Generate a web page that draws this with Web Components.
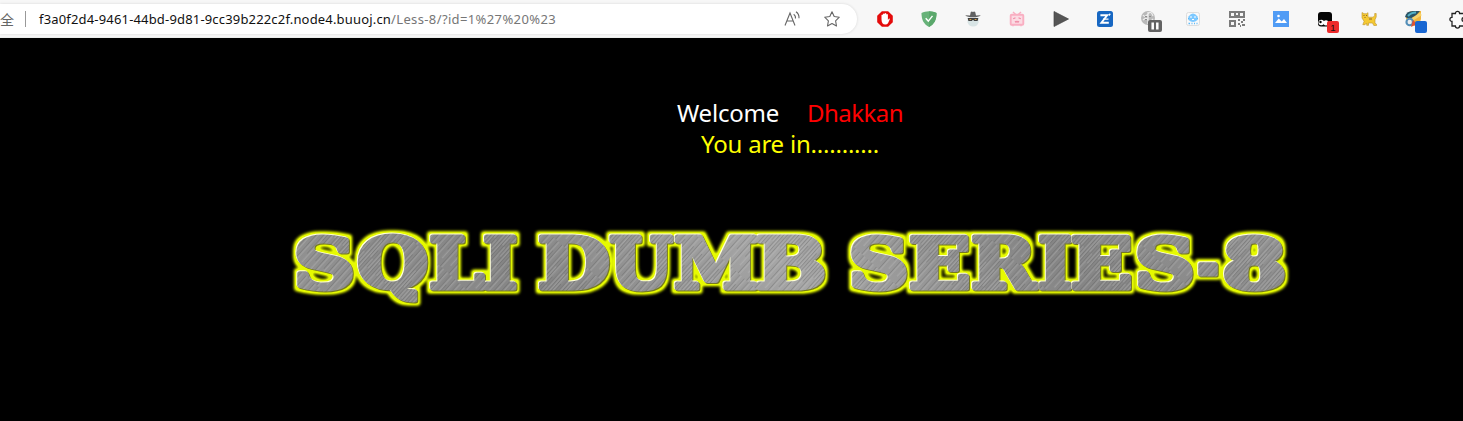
<!DOCTYPE html>
<html lang="en">
<head>
<meta charset="utf-8">
<title>Less-8</title>
<style>
html,body{margin:0;height:100%;background:#000;overflow:hidden}
</style>
</head>
<body>
<browser-window></browser-window>
<script>
const define = (name, html, init) => customElements.define(name, class extends HTMLElement {
  constructor() {
    super();
    this.attachShadow({mode: 'open'}).innerHTML = html;
  }
  connectedCallback() { if (init) init(this, this.shadowRoot); }
});
const ctx = document.createElement('canvas').getContext('2d');

/* Text spread evenly over a given width through letter spacing */
define('fit-text', `<style>:host{display:block;white-space:pre;flex:none}</style><slot></slot>`, host => {
  const width = +host.getAttribute('width'), cs = getComputedStyle(host);
  ctx.font = `${cs.fontWeight} ${cs.fontSize} ${cs.fontFamily}`;
  const text = host.textContent;
  host.style.width = width + 'px';
  host.style.letterSpacing = (width - ctx.measureText(text).width) / text.length + 'px';
});

const icons = {
  stop: `<path d="M4.9.2h6.2l4.7 4.6v6.4l-4.7 4.6H4.9L.2 11.200V4.800z" fill="#e40b0b"/><path d="M4.500 8.200V4.100q.8-1 1.500 0V7V3q.8-1 1.600 0V6.800V2.500q.9-1 1.700 0V7V3.500q.8-.9 1.600 0V9l.9-1.300q.8-.5 1.100.2L11 12.200q-1 1.400-2.600 1.400c-2.600 0-3.900-1.900-3.900-5.400z" fill="#fff"/>`,
  shield: `<path d="M8 .2C5.500.3 2.600.9.500 1.900C.4 8 2.300 12.800 8 16c5.700-3.200 7.600-8 7.500-14.100C13.400.9 10.500.3 8 .2z" fill="#67b279"/><path d="M8 .2v15.800c5.700-3.200 7.600-8 7.500-14.100C13.400.9 10.500.3 8 .2z" fill="#5ba86c"/><path d="M4.700 7.300l2.600 2.800 4.200-5.200" fill="none" stroke="#fff" stroke-width="1.400"/>`,
  spy: `<path d="M2.600 6.800h11v4.500q-1 4.200-5.500 4.200t-5.500-4.200z" fill="#d8e4e5"/><path d="M5 4.500L5.800 1q1-.9 2.200 0q1.200-.9 2.200 0L11 4.500l4.800-.3q-2.300 2-7.800 2T.2 4.200z" fill="#616161"/><path d="M2.700 7h10.600l-.7 3H9.200L8 8.700 6.800 10H3.400z" fill="#404040"/><path d="M4.500 8.500h1.800M9.700 8.500h1.800" stroke="#d79d46"/>`,
  tv: `<path d="M4 1l2.700 2.500M12 1L9.300 3.500M4 14.200v1M12 14.200v1" stroke="#f9afc2" stroke-width="1.500"/><rect x="1.700" y="3.800" width="12.600" height="10" rx="1" fill="#fbdbe3" stroke="#f9afc2" stroke-width="1.900"/><path d="M4.200 7.700l2.300-1M11.800 7.700l-2.300-1M6 10.300l1 .9 1-.9 1 .9 1-.9" fill="none" stroke="#ef8ba6" stroke-width="1.200"/>`,
  play: `<path d="M1 .5L15.500 8 1 15.500z" fill="#555" stroke="#444" stroke-width=".7"/>`,
  zed: `<rect width="16" height="16" rx="2.500" fill="#1767c2"/><path d="M3.400 4.300h6.800L4.400 11.700h7.400" fill="none" stroke="#fff" stroke-width="1.900"/><path d="M6 8.100h5.500M11.800 4.500l1.500-1.700" stroke="#fff" stroke-width="1.300"/>`,
  paused: `<circle cx="7" cy="7" r="7" fill="#b9b9b9"/><path d="M2 4q2 3 5-1t5 2M2 9q3-3 5 0t5-1M7 1v12" fill="none" stroke="#ededed" stroke-width="1.300"/><path d="M4 5.500h2M8 5.500h2M4 8.500h2" stroke="#8d8d8d"/><rect x="7" y="9" width="14" height="12" rx="2" fill="#636363"/><path d="M11.700 11.500v7M16.300 11.500v7" stroke="#fff" stroke-width="2.500"/>`,
  robot: `<rect x="1.500" y="1.500" width="13" height="13" rx="2" fill="#f9f9f9" stroke="#ddd"/><path d="M3.500 5.500q4.500-6 9 0v3.500q-4.500 4-9 0z" fill="#7cc8ff"/><path d="M5 6h2M9 6h2M7 8.500h2" stroke="#fff"/><path d="M3.500 12.500h1.500m1.500 0h1m1.500 0h1m1.500 0h1M3 7.500h1M12 7.500h1" stroke="#60baf8" stroke-width="1.500"/>`,
  qr: `<g fill="none" stroke="#7b7b7b" stroke-width="2"><path d="M1 1h5v5H1zM10 1h5v5h-5zM1 10h5v5H1z"/><path d="M8 0v2M8 4v3M9 9h2M12 11h2M9 13h2M14 9h2M13 14h3M11 15h1"/></g>`,
  image: `<rect width="16" height="16" fill="#509cf5"/><path d="M2 12l3.700-4.400 3 2.800L11 8l3 4z" fill="#fff"/><circle cx="5.500" cy="5" r="1.300" fill="#fff"/>`,
  monkey: `<rect x="1" y="1" width="14" height="14.500" rx="3" fill="#050505"/><circle cx="4.300" cy="11.500" r="2.800" fill="#fff"/><circle cx="9" cy="11.800" r="2.600" fill="#fff"/><circle cx="3.500" cy="11" r="1.200"/><rect x="10" y="10" width="12" height="12" rx="2" fill="#ed2b2b"/><text x="16" y="19.500" text-anchor="middle" font-size="9.500" fill="#111">1</text>`,
  cat: `<path d="M1 1.500l2 1.200h2.500L7 1.700v4.500h5l1.700-1.500V2.500h1.500v3.500L14 8.700v3.500l1.500 1v1.300h-2.700l-1.300-2.500H7.500v2.300H5.700V12L4 13.700H1.800l1.300-3.400L1 7z" fill="#f5c932" stroke="#bd942c" stroke-width=".6"/><path d="M2.500 4.500h1M5 4.500h1M8 8h3M3.500 6.500h1" stroke="#8b672d"/>`,
  paint: `<path d="M1 8Q1 0 9 0h7v8q-1 6-7 7z" fill="#f1b63c"/><path d="M0 6Q1 0 8 0h7L7 9z" fill="#2b5365"/><path d="M3 5q3-3.500 8-3.500" stroke="#51b1c5" stroke-width="2" fill="none"/><path d="M6 9l10-6" stroke="#f7d36b" stroke-width="3"/><circle cx="4.700" cy="11" r="4.300" fill="#548fb8"/><circle cx="4.700" cy="11" r="2.200" fill="#eee"/><path d="M8 9l4 4-6 3z" fill="#dc5337"/><rect x="10" y="10" width="12" height="12" rx="2" fill="#1967d2"/>`,
  puzzle: `<path d="M3 2.500h3.400a2.100 2.100 0 0 1 4.200 0H15v4a2 2 0 0 0 0 4v4.500h-4.400a2.100 2.100 0 0 1-4.200 0H3v-4.500a2.100 2.100 0 1 1 0-4.200z" fill="#fbfbfb" stroke="#222" stroke-width="1.300"/>`,
  read: `<path d="M1 14.500L6 2l5 12.500M2.800 10h6.400" fill="none" stroke="#666" stroke-width="1.100"/><path d="M9.700 3.200q2 1.500 1.800 4.300M12 .8q3.300 2.300 3 6.500" fill="none" stroke="#666" stroke-width="1.100"/>`,
  star: `<path d="M8 .8l2.200 4.700 5.100.7-3.700 3.600.9 5.200L8 12.500 3.500 15l.9-5.200L.7 6.200l5.100-.7z" fill="none" stroke="#666" stroke-width="1.100" stroke-linejoin="round"/>`
};
define('tool-icon', `<style>:host{display:block;width:16px;height:16px;flex:none}svg{display:block;overflow:visible;font-family:"Liberation Sans",sans-serif}</style><svg width="16" height="16" viewBox="0 0 16 16"></svg>`,
  (host, root) => { root.querySelector('svg').innerHTML = icons[host.getAttribute('name')]; });

define('address-bar', `<style>
:host{display:flex;box-sizing:border-box;width:857px;height:30px;background:#fff;border-radius:0 15px 15px 0;box-shadow:0 0 3px #0002;align-items:center;flex:none;font:13px/30px "Noto Sans","Open Sans",sans-serif;color:#111;padding-right:17px}
.safe{font:14px/30px "Noto Sans CJK SC",sans-serif;color:#666;width:25px}
.rule{width:1px;height:16px;background:#999;margin-right:13px}
.path{color:#767676;margin-right:auto}
tool-icon+tool-icon{margin-left:24px}
</style><span class="safe">全</span><span class="rule"></span><fit-text width="352">f3a0f2d4-9461-44bd-9d81-9cc39b222c2f.node4.buuoj.cn</fit-text><fit-text class="path" width="165">/Less-8/?id=1%27%20%23</fit-text><tool-icon name="read"></tool-icon><tool-icon name="star"></tool-icon>`);

define('browser-toolbar', `<style>
:host{display:flex;box-sizing:border-box;height:38px;padding-top:4px;background:#f7f7f7;overflow:hidden;border-bottom:1px solid #eceeed}
.ext{display:flex;gap:28px;padding:7px 0 0 20px}
</style><address-bar></address-bar><div class="ext">${['stop','shield','spy','tv','play','zed','paused','robot','qr','image','monkey','cat','paint','puzzle'].map(n => `<tool-icon name="${n}"></tool-icon>`).join('')}</div>`);

/* Brushed metal lettering; each entry is glyph, left edge, right edge */
const words = [
  [['S',296,353],['Q',357,427],['L',430,485],['I',484,517]],
  [['D',539,609],['U',609,674],['M',674,758],['B',757,825]],
  [['S',851,907],['E',910,969],['R',972,1039],['I',1039,1072],['E',1072,1131],['S',1137,1193],['-',1197,1219],['8',1224,1284]]
];
const weight = 5;
define('metal-title', `<style>:host{display:block;height:100px}svg{display:block}text{font:bold 70px "DejaVu Serif",serif;fill:url(#metal);stroke:url(#metal);stroke-width:${weight}px;stroke-linejoin:round}</style>
<svg width="1463" height="100" viewBox="0 215 1463 100"><defs>
<pattern id="metal" width="1463" height="421" patternUnits="userSpaceOnUse"><rect width="1463" height="421" fill="url(#sheen)"/><rect width="1463" height="421" fill="url(#brush)"/></pattern>
<linearGradient id="sheen" gradientUnits="userSpaceOnUse" x1="290" y1="310" x2="560" y2="40" spreadMethod="reflect"><stop offset="0" stop-color="#949494"/><stop offset=".5" stop-color="#858585"/><stop offset="1" stop-color="#a6a6a6"/></linearGradient>
<pattern id="brush" width="11.300" height="97" patternUnits="userSpaceOnUse" patternTransform="rotate(42)"><path d="M1 0v50M4 20v70M6.500 0v40M9.500 40v57" stroke="#ccc" stroke-width=".6" opacity=".6"/><path d="M2.400 10v70M5.200 0v60M8 30v67M10.600 0v50" stroke="#555" stroke-width=".6" opacity=".5"/></pattern>
<filter id="glow" filterUnits="userSpaceOnUse" x="275" y="215" width="1025" height="100" color-interpolation-filters="sRGB">
<feMorphology in="SourceAlpha" operator="dilate" radius="3" result="fat"/><feGaussianBlur in="fat" stdDeviation="1.700" result="soft"/><feComponentTransfer in="soft" result="strong"><feFuncA type="linear" slope="1.250"/></feComponentTransfer><feFlood flood-color="#e6fa00"/><feComposite in2="strong" operator="in" result="halo"/>
<feOffset in="SourceAlpha" dx="-.6" dy="-.6" result="up"/><feFlood flood-color="#ffffd8"/><feComposite in2="up" operator="in" result="light"/>
<feOffset in="SourceAlpha" dx=".7" dy=".7" result="down"/><feFlood flood-color="#777a20"/><feComposite in2="down" operator="in" result="dark"/>
<feMerge><feMergeNode in="halo"/><feMergeNode in="dark"/><feMergeNode in="light"/><feMergeNode in="SourceGraphic"/></feMerge></filter></defs>
<g filter="url(#glow)"></g></svg>`, (host, root) => {
  ctx.font = 'bold 70px "DejaVu Serif"';
  root.querySelector('g').innerHTML = words.map(word => '<text y="287.500">' + word.map(([c, l, r]) => {
    const m = ctx.measureText(c);
    const s = (r - l - weight) / (m.actualBoundingBoxRight + m.actualBoundingBoxLeft);
    return `<tspan x="${l + weight / 2 + m.actualBoundingBoxLeft * s}" textLength="${m.width * s}" lengthAdjust="spacingAndGlyphs">${c}</tspan>`;
  }).join('') + '</text>').join('');
});

define('lesson-page', `<style>
:host{display:block;height:383px;background:#000;font:24px/31px "Noto Sans","Open Sans",sans-serif}
.welcome{display:flex;gap:28px;padding:59px 0 0 677px;color:#fff}
.name{color:#f00}
.status{padding-left:701px;color:#ff0;margin-bottom:56px}
</style><div class="welcome"><fit-text width="102">Welcome</fit-text><fit-text class="name" width="96">Dhakkan</fit-text></div><div class="status"><fit-text width="178">You are in...........</fit-text></div><metal-title></metal-title>`);

define('browser-window', `<style>:host{display:block;width:1463px;height:421px;overflow:hidden}</style><browser-toolbar></browser-toolbar><lesson-page></lesson-page>`);
</script>
</body>
</html>
